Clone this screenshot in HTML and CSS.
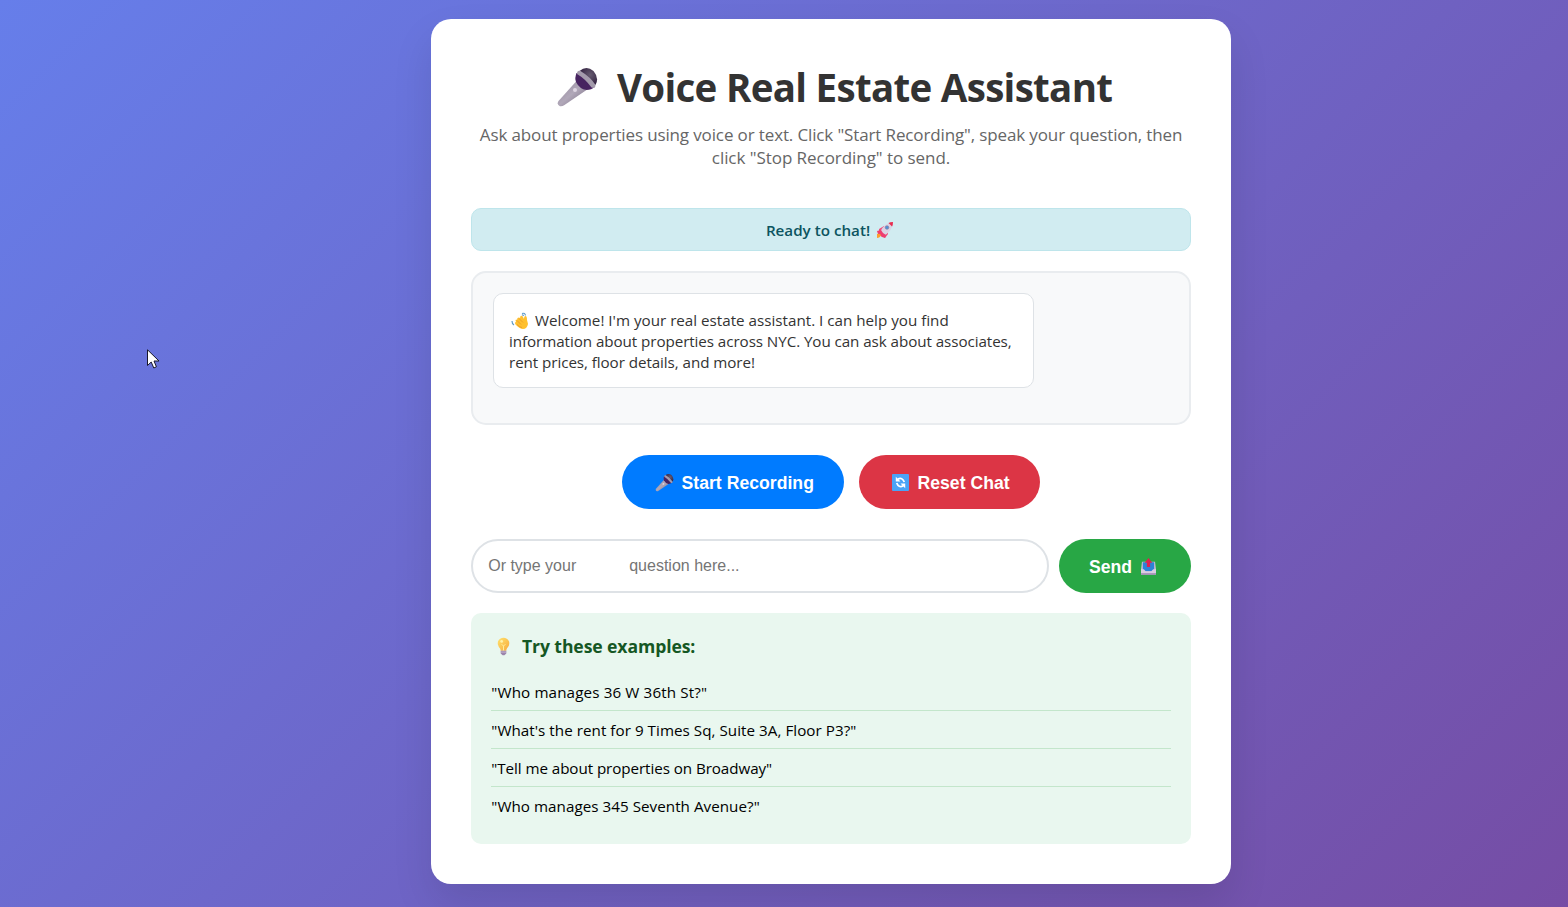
FILE: index.html
```html
<!DOCTYPE html>
<html lang="en">
<head>
<meta charset="utf-8">
<title>Voice Real Estate Assistant</title>
<link rel="stylesheet" href="styles.css">
</head>
<body>
<svg width="0" height="0" class="defs" aria-hidden="true">
  <defs>
    <linearGradient id="handle" x1="0" y1="0" x2="1" y2="1"><stop offset="0" stop-color="#8f8598"/><stop offset=".5" stop-color="#b1a8b9"/><stop offset="1" stop-color="#75697f"/></linearGradient>
    <radialGradient id="head" cx=".6" cy=".4" r=".6"><stop offset="0" stop-color="#665b70"/><stop offset="1" stop-color="#352443"/></radialGradient>
    <linearGradient id="bulb" x1="0" y1="0" x2="1" y2="1"><stop offset="0" stop-color="#ffe36e"/><stop offset="1" stop-color="#f7a93b"/></linearGradient>
    <symbol id="mic" viewBox="0 0 40 40">
      <path d="M19 13 1 33Q-1 36 2 38Q4 39 7 37L29 22Z" fill="url(#handle)"/>
      <circle cx="17.500" cy="22" r="2" fill="#ddd5e2"/>
      <path d="M19 5Q17 10 18.500 14Q22 21 29 22Q34 22 37 19L22 5Z" fill="#472360"/>
      <path d="M22 3Q29-3 36 3Q42 10 38 17Z" fill="url(#head)"/>
      <path d="M19.500 6Q19.500 2 23 3Q33 9 38 17Q38 21 34 19.500Q28 11 19.500 6Z" fill="#a49bac"/>
    </symbol>
    <symbol id="rocket" viewBox="0 0 18 18">
      <path d="M3 8 8 5l4 1-5 6-4-1zM7 12l5-4v5l-3 4z" fill="#ee4d7c"/>
      <path d="M4 11Q8 2 17 1Q17 9 8 15Z" fill="#dcd3e4"/>
      <path d="M12.500 2Q14 1 17 1Q17 4 16 5.500Z" fill="#e82d4f"/>
      <circle cx="11" cy="6.500" r="1.800" fill="#4b91d9" stroke="#8d82a0" stroke-width=".7"/>
      <path d="m1 10 4-1 2 3 3 2-1 3-3-1-4-3z" fill="#ee3d70"/>
      <path d="M1 13Q3 12 5 14Q4 17 1 17Z" fill="#ff9d2e"/>
    </symbol>
    <symbol id="wave" viewBox="0 0 18 18">
      <path d="M4 11Q4 10 5 10L4.500 8.500Q5 7 6 8L6.500 6Q8 5 9 6L9.500 4Q11 3 12 5L13 7Q13 4 14.500 4Q16 4 16 8L17 12Q16 17 12 17Q9 17 5 13Q4 12 4 11Z" fill="#ffc02e"/>
      <path d="m6 8.500 4 4M8 6.500l4 4M6 12.500q3 3 5 3" fill="none" stroke="#e79528" stroke-width=".8"/>
      <path d="M11 1.500Q14 .5 14.500 3.500M1 9q0 3 2 4M11 3Q12 2.500 12.500 4" fill="none" stroke="#609bc7" stroke-width="1.200"/>
    </symbol>
    <symbol id="reset" viewBox="0 0 18 18">
      <rect x="0" y="0" width="18" height="18" rx="1" fill="#4aa3f6"/>
      <path d="M6 5.500Q11 3 13 8.500M12 12.500Q7 15 5 9.500" fill="none" stroke="#fff" stroke-width="1.900"/>
      <path d="M4 3V8H9ZM14 15V10H9Z" fill="#fff"/>
    </symbol>
    <symbol id="outbox" viewBox="0 0 16 18">
      <path d="M1 4H15L16 12V17H0V12Z" fill="#c6b9d2"/>
      <path d="M2 4.500H14V12L12 14H4L2 12Z" fill="#2d83d7"/>
      <path d="M0 12H3L5 14H11L13 12H16V17H0Z" fill="#d9cde2"/>
      <path d="M0 16H16V18H0Z" fill="#a995bb"/>
      <path d="M6.300 9.500V5H4L8 0l4 5H9.700V9.500Z" fill="#dc224f"/>
    </symbol>
    <symbol id="idea" viewBox="0 0 14 20">
      <path d="M4 14Q4 12 2 10Q0 7 1 4Q3 0 7 0T13 4Q14 8 11 11Q10 12 10 14Z" fill="url(#bulb)"/>
      <path d="M5 7l2 2 2-2M7 9v5" fill="none" stroke="#fff0a2" stroke-width="1"/>
      <circle cx="5" cy="4" r="1.500" fill="#fff2ab"/>
      <path d="M4 14H10V17L8 19H6L4 17Z" fill="#9b85ab"/><path d="M4 15.500H10" stroke="#c9b8d3"/>
    </symbol>
  </defs>
</svg>
<main class="card">
  <h1 class="title"><svg class="icon-title"><use href="#mic"/></svg><span>Voice Real Estate Assistant</span></h1>
  <p class="subtitle"><span class="subtitle-first">Ask about properties using voice or text. Click "Start Recording", speak your question, then</span><br><span class="subtitle-second">click "Stop Recording" to send.</span></p>
  <div class="status"><span>Ready to chat!</span><svg class="icon-rocket"><use href="#rocket"/></svg></div>
  <section class="chat">
    <div class="message"><svg class="icon-wave"><use href="#wave"/></svg><span>Welcome! I'm your real estate assistant. I can help you find</span><br><span class="snug">information about properties across NYC. You can ask about associates,</span><br><span class="snug">rent prices, floor details, and more!</span></div>
  </section>
  <div class="controls">
    <button class="btn record"><svg class="icon-mic"><use href="#mic"/></svg><span>Start Recording</span></button>
    <button class="btn reset"><svg class="icon-reset"><use href="#reset"/></svg><span>Reset Chat</span></button>
  </div>
  <div class="entry">
    <div class="field">Or type your<span class="gap"></span>question here...</div>
    <button class="btn send"><span>Send</span><svg class="icon-outbox"><use href="#outbox"/></svg></button>
  </div>
  <section class="examples">
    <h2 class="examples-title"><svg class="icon-idea"><use href="#idea"/></svg><span>Try these examples:</span></h2>
    <ul class="list">
      <li class="wide">"Who manages 36 W 36th St?"</li>
      <li class="open">"What's the rent for 9 Times Sq, Suite 3A, Floor P3?"</li>
      <li class="snug">"Tell me about properties on Broadway"</li>
      <li class="open">"Who manages 345 Seventh Avenue?"</li>
    </ul>
  </section>
</main>
<svg class="cursor" viewBox="0 0 13 20"><path d="M.5 .8V16.500L4.200 13l2.600 6 2.600-1.200L7 12H12Z" fill="#fff" stroke="#17172a"/></svg>
</body>
</html>
```
FILE: styles.css
```css
* { box-sizing: border-box; margin: 0; padding: 0; }
body { height: 907px; overflow: hidden; padding: 19px 0 0 431px; background: linear-gradient(135deg, #667eea 0%, #764ba2 103.5%); font-family: "Open Sans", "Noto Sans", sans-serif; }
.defs { position: absolute; }
svg { flex: none; }
.card { width: 800px; height: 865px; padding: 40px; border-radius: 20px; background: #fff; box-shadow: 0 20px 40px rgba(0,0,0,.1); display: flex; flex-direction: column; }
.title { height: 56px; display: flex; align-items: center; padding-left: 86px; font-size: 38.5px; line-height: 56px; letter-spacing: -.5px; word-spacing: -1.5px; color: #333; white-space: nowrap; }
.icon-title { width: 41px; height: 40px; margin-right: 19px; margin-top: 2px; }
.subtitle { margin-top: 8px; height: 46px; text-align: center; font-size: 17px; line-height: 23px; color: #666; white-space: nowrap; }
.title { letter-spacing: -.7px; word-spacing: 0; }
.subtitle-first { letter-spacing: -.13px; }
.subtitle-second { letter-spacing: -.05px; }
.status { margin-top: 39px; height: 43px; padding-right: 2px; display: flex; align-items: center; justify-content: center; gap: 6px; border: 1px solid #bee5eb; border-radius: 10px; background: #d1ecf1; color: #0c5460; font-size: 15.2px; font-weight: 600; }
.icon-rocket { width: 18px; height: 18px; }
.chat { margin-top: 20px; height: 154px; padding: 20px; border: 2px solid #e9ecef; border-radius: 15px; background: #f8f9fa; }
.message { width: 541px; height: 95px; padding: 16px 15px; border: 1px solid #dee2e6; border-radius: 10px; background: #fff; color: #333; font-size: 15.2px; line-height: 21px; white-space: nowrap; }
.icon-wave { width: 18px; height: 18px; margin: 0 6px 0 2px; vertical-align: -4px; }
.snug { letter-spacing: -.07px; }
.open { letter-spacing: .04px; }
.wide { letter-spacing: .13px; }
.controls { margin-top: 30px; display: flex; justify-content: center; gap: 15px; }
.btn { height: 54px; display: flex; align-items: center; border: 0; border-radius: 27px; color: #fff; font: bold 17.6px "Liberation Sans", Arial, sans-serif; letter-spacing: .03px; white-space: nowrap; }
.btn span { padding-top: 2px; }
.record { width: 222px; padding-left: 33px; background: #007bff; }
.reset { width: 181px; padding-left: 33px; background: #dc3545; }
.icon-mic { width: 19px; height: 18px; margin-right: 7.5px; margin-top: 1px; }
.icon-reset { width: 17px; height: 17px; margin-right: 8.500px; }
.entry { margin-top: 30px; display: flex; gap: 10px; }
.field { flex: 1; height: 54px; padding-left: 15.2px; border: 2px solid #dee2e6; border-radius: 27px; font: 16px/49px "Liberation Sans", Arial, sans-serif; color: #757575; white-space: nowrap; }
.gap { display: inline-block; width: 53px; }
.send { width: 132px; padding-left: 30px; background: #28a745; }
.icon-outbox { width: 15px; height: 17px; margin-left: 9px; margin-top: 1px; }
.examples { margin-top: 20px; height: 231px; padding: 20px; border-radius: 10px; background: #e9f7ef; }
.examples-title { height: 27px; display: flex; align-items: center; padding-left: 6px; color: #155724; font-size: 17.6px; line-height: 27px; letter-spacing: -.1px; white-space: nowrap; }
.icon-idea { width: 13px; height: 20px; margin-right: 12px; }
.list { margin-top: 13px; list-style: none; font-size: 15.2px; color: #000; }
.list li { height: 38px; padding: 1px 0 0 .3px; line-height: 37px; border-bottom: 1px solid #c3e6cb; white-space: nowrap; }
.list li:last-child { border-bottom: 0; }
.cursor { position: absolute; left: 147px; top: 349px; width: 13px; height: 20px; }
```
